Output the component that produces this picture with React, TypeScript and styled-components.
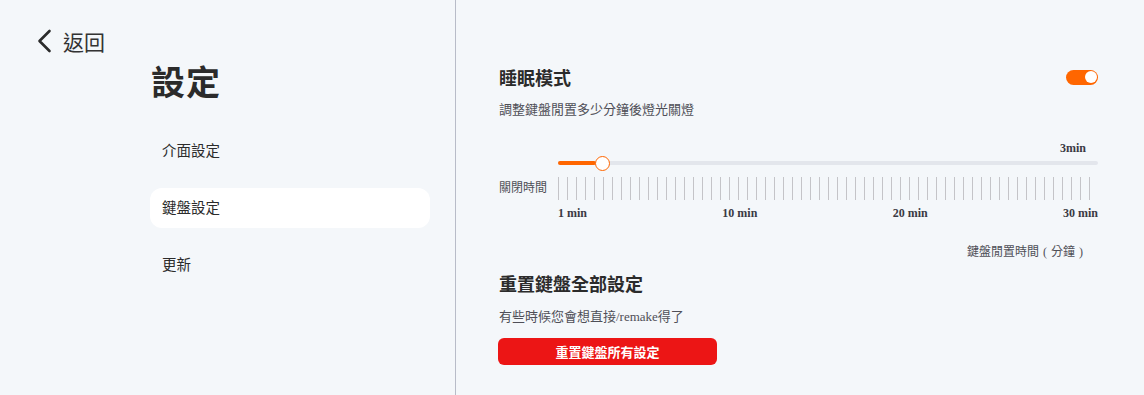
import React, { useState } from "react";
import styled, { createGlobalStyle } from "styled-components";

const GlobalStyle = createGlobalStyle`
  html, body { margin: 0; padding: 0; background: #f4f7fa; }
  body { font-family: "Noto Sans CJK TC", "Noto Sans", sans-serif; color: #2b2b2b; }
  * { box-sizing: border-box; }
`;

const Page = styled.div`
  display: flex;
  height: 395px;
  width: 1144px;
  background: #f4f7fa;
  overflow: hidden;
`;

const Sidebar = styled.aside`
  width: 456px;
  flex: none;
  border-right: 1px solid #b8bcc8;
  display: flex;
  flex-direction: column;
`;

const BackLink = styled.button`
  display: flex;
  align-items: center;
  gap: 10px;
  margin: 28px 0 0 35px;
  padding: 0;
  height: 26px;
  border: none;
  background: none;
  cursor: pointer;
  font-family: "Noto Sans CJK TC", sans-serif;
  font-size: 21px;
  font-weight: 400;
  color: #333;
  align-self: flex-start;
`;

const NavBlock = styled.div`
  margin-left: 150px;
  width: 280px;
  display: flex;
  flex-direction: column;
`;

const PageTitle = styled.h1`
  margin: 7px 0 0 1px;
  font-size: 34px;
  line-height: 40px;
  font-weight: 700;
  color: #2b2b2b;
  letter-spacing: 1px;
`;

const NavList = styled.nav`
  margin-top: 30px;
  display: flex;
  flex-direction: column;
  gap: 17px;
`;

const NavItem = styled.div<{ $active?: boolean }>`
  height: 40px;
  display: flex;
  align-items: center;
  padding: 0 0 4px 12px;
  border-radius: 12px;
  font-size: 14.5px;
  color: #2b2b2b;
  background: ${(p) => (p.$active ? "#ffffff" : "transparent")};
  cursor: pointer;
`;

const Main = styled.main`
  flex: 1;
  padding: 0 46px 0 43px;
  display: flex;
  flex-direction: column;
  font-family: "Liberation Serif", "Noto Sans CJK TC", serif;
`;

const SectionHeader = styled.div<{ $top: number }>`
  margin-top: ${(p) => p.$top}px;
  display: flex;
  align-items: center;
  justify-content: space-between;
  height: 26px;
`;

const SectionTitle = styled.h2`
  margin: 0;
  font-family: "Noto Sans CJK TC", sans-serif;
  font-size: 18px;
  line-height: 26px;
  font-weight: 700;
  color: #2b2b2b;
`;

const Desc = styled.p<{ $top: number }>`
  margin: ${(p) => p.$top}px 0 0;
  font-size: 13px;
  line-height: 18px;
  color: #4f4f57;
`;

const Toggle = styled.button<{ $on: boolean }>`
  position: relative;
  width: 32px;
  height: 15px;
  border-radius: 8px;
  border: none;
  padding: 0;
  cursor: pointer;
  background: ${(p) => (p.$on ? "#ff6600" : "#cfd3da")};
`;

const Knob = styled.span<{ $on: boolean }>`
  position: absolute;
  top: 1.5px;
  left: ${(p) => (p.$on ? "18.5px" : "1.5px")};
  width: 12px;
  height: 12px;
  border-radius: 50%;
  background: #ffffff;
`;

const SliderGrid = styled.div<{ $top: number }>`
  margin-top: ${(p) => p.$top}px;
  display: grid;
  grid-template-columns: 59px 1fr;
  align-items: center;
`;

const ValueLabel = styled.div`
  grid-column: 2;
  text-align: right;
  padding-right: 12px;
  font-size: 12px;
  line-height: 14px;
  font-weight: 700;
  color: #3a3a44;
`;

const SliderArea = styled.div`
  grid-column: 2;
  position: relative;
  height: 16px;
  display: flex;
  align-items: center;
`;

const Track = styled.div`
  width: 100%;
  height: 4px;
  border-radius: 2px;
  background: #e3e6ec;
`;

const Fill = styled.div`
  position: absolute;
  left: 0;
  top: 6px;
  height: 4px;
  border-radius: 2px;
  background: #ff6600;
`;

const Thumb = styled.div`
  position: absolute;
  top: 1px;
  width: 15px;
  height: 15px;
  margin-left: -7.5px;
  border-radius: 50%;
  background: #ffffff;
  border: 1.5px solid #ff6600;
`;

const TickLabel = styled.div`
  grid-column: 1;
  font-family: "Noto Sans CJK TC", sans-serif;
  font-size: 12px;
  line-height: 16px;
  color: #4f4f57;
  padding-top: 3px;
`;

const Ticks = styled.div`
  grid-column: 2;
  margin-top: 6px;
  display: flex;
  height: 23px;
`;

const Tick = styled.span`
  width: 9px;
  flex: none;
  height: 100%;
  border-left: 1px solid #c4c4c8;
`;

const Scale = styled.div`
  grid-column: 2;
  margin-top: 6px;
  display: flex;
  justify-content: space-between;
  font-size: 12px;
  line-height: 14px;
  font-weight: 700;
  color: #3a3a44;
`;

const Caption = styled.div`
  margin-top: 24px;
  text-align: right;
  padding-right: 15px;
  font-size: 12px;
  line-height: 16px;
  color: #4f4f57;
  word-spacing: 1px;
`;

const DangerButton = styled.button`
  margin-top: 12px;
  margin-left: -1px;
  width: 219px;
  height: 27px;
  border: none;
  border-radius: 6px;
  background: #ec1515;
  color: #ffffff;
  font-family: "Noto Sans CJK TC", sans-serif;
  font-size: 13px;
  font-weight: 700;
  cursor: pointer;
`;

const ChevronLeft = () => (
  <svg width="18" height="24" viewBox="0 0 18 24" fill="none">
    <path d="M14.5 2 L4.5 12 L14.5 22" stroke="#2b2b2b" strokeWidth="2.6" strokeLinecap="round" strokeLinejoin="round" />
  </svg>
);

export default function App() {
  const [sleep, setSleep] = useState(true);
  const min = 1;
  const max = 30;
  const value = 3;
  const width = 540;
  const thumbR = 8;
  const pos = thumbR + ((value - min) / (max - min)) * (width - thumbR * 2);

  return (
    <>
      <GlobalStyle />
      <Page>
        <Sidebar>
          <BackLink>
            <ChevronLeft />
            返回
          </BackLink>
          <NavBlock>
            <PageTitle>設定</PageTitle>
            <NavList>
              <NavItem>介面設定</NavItem>
              <NavItem $active>鍵盤設定</NavItem>
              <NavItem>更新</NavItem>
            </NavList>
          </NavBlock>
        </Sidebar>
        <Main>
          <SectionHeader $top={64}>
            <SectionTitle>睡眠模式</SectionTitle>
            <Toggle $on={sleep} onClick={() => setSleep(!sleep)}>
              <Knob $on={sleep} />
            </Toggle>
          </SectionHeader>
          <Desc $top={11}>調整鍵盤閒置多少分鐘後燈光關燈</Desc>
          <SliderGrid $top={22}>
            <ValueLabel>{value}min</ValueLabel>
            <SliderArea>
              <Track />
              <Fill style={{ width: pos - 6 }} />
              <Thumb style={{ left: pos }} />
            </SliderArea>
            <TickLabel>關閉時間</TickLabel>
            <Ticks>
              {Array.from({ length: 60 }).map((_, i) => (
                <Tick key={i} />
              ))}
            </Ticks>
            <Scale>
              <span>1 min</span>
              <span>10 min</span>
              <span>20 min</span>
              <span>30 min</span>
            </Scale>
          </SliderGrid>
          <Caption>鍵盤閒置時間 ( 分鐘 )</Caption>
          <SectionHeader $top={10}>
            <SectionTitle>重置鍵盤全部設定</SectionTitle>
          </SectionHeader>
          <Desc $top={12}>有些時候您會想直接/remake得了</Desc>
          <DangerButton>重置鍵盤所有設定</DangerButton>
        </Main>
      </Page>
    </>
  );
}
